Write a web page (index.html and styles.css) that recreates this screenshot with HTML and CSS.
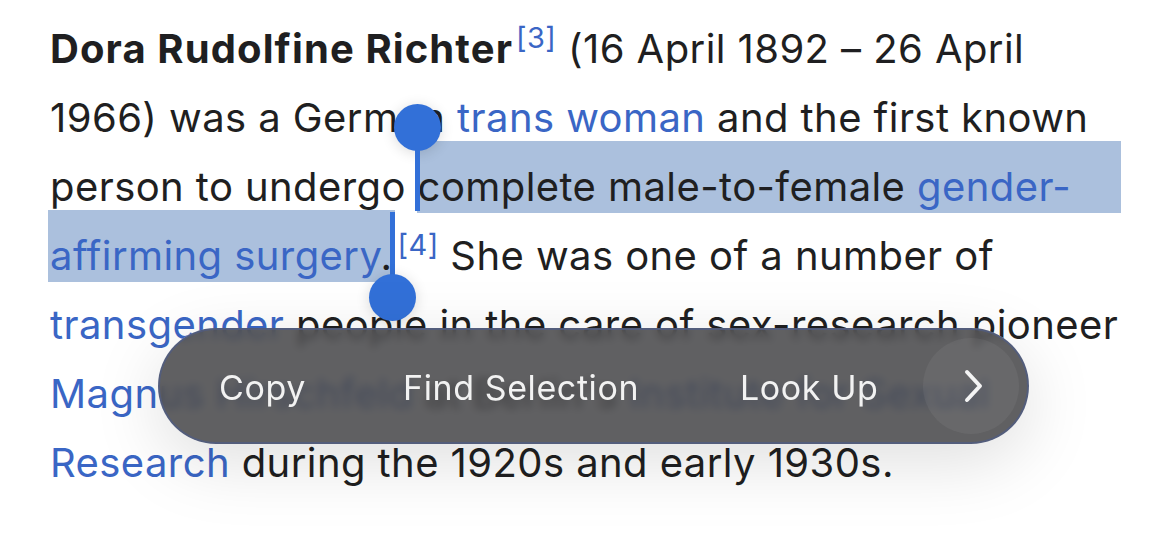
FILE: index.html
```html
<!DOCTYPE html>
<html>
<head>
<meta charset="utf-8">
<link rel="stylesheet" href="styles.css">
</head>
<body>
<div class="page">
  <p class="article">
    <b class="title">Dora Rudolfine Richter</b><sup class="ref">[3]</sup> (16 April 1892 – 26 April<br>
    1966) was a German <a class="link">trans woman</a> and the first known<br>
    person to undergo <span class="sel sel-first">complete male-to-female <a class="link">gender-</a></span><br>
    <span class="sel sel-last"><a class="link">affirming surgery</a>.</span><sup class="ref">[4]</sup> She was one of a number of<br>
    <a class="link">transgender</a> people in the care of sex-research pioneer<br>
    <a class="link">Magnus Hirschfeld</a> at Berlin's <a class="link">Institute for Sexual</a><br>
    <a class="link">Research</a> during the 1920s and early 1930s.
  </p>

  <div class="handle handle-start"><span class="knob"></span><span class="stem"></span></div>
  <div class="handle handle-end"><span class="stem"></span><span class="knob"></span></div>

  <div class="menu">
    <span class="menu-item item-copy">Copy</span>
    <span class="menu-item item-find">Find Selection</span>
    <span class="menu-item item-look">Look Up</span>
    <span class="menu-more">
      <svg width="24" height="34" viewBox="0 0 24 34"><polyline points="6,3 19,17 6,31" fill="none" stroke="#f4f4f4" stroke-width="4" stroke-linecap="round" stroke-linejoin="round"/></svg>
    </span>
  </div>
</div>
</body>
</html>
```

FILE: styles.css
```css
html, body {
  margin: 0;
  padding: 0;
  background: #ffffff;
}

.page {
  position: relative;
  width: 1170px;
  height: 533px;
  overflow: hidden;
}

.article {
  margin: 0;
  padding: 14px 0 0 50px;
  font-family: "Inter", "Noto Sans", sans-serif;
  font-size: 40px;
  line-height: 69px;
  letter-spacing: 0.42px;
  color: #1f1f21;
  white-space: nowrap;
}

.title {
  font-weight: 700;
  letter-spacing: 1.1px;
}

.link {
  color: #3a66c5;
}

.ref {
  color: #3a66c5;
  font-size: 29px;
  line-height: 0;
  vertical-align: baseline;
  position: relative;
  top: -15px;
  margin-left: 3px;
}

.sel {
  background: #abc0dd;
  padding-top: 21px;
  padding-bottom: 2px;
}

.sel-first {
  padding-left: 1px;
  padding-right: 50px;
  margin-left: -1px;
}

.sel-last {
  padding-left: 2px;
  margin-left: -2px;
  padding-right: 2px;
}

.handle {
  position: absolute;
  display: flex;
  flex-direction: column;
  align-items: center;
  width: 48px;
}

.handle-start {
  left: 393px;
  top: 104px;
}

.handle-end {
  left: 368px;
  top: 212px;
}

.knob {
  width: 47px;
  height: 47px;
  border-radius: 50%;
  background: #3270d8;
  box-shadow: 0 2px 14px rgba(0, 0, 0, 0.14);
}

.stem {
  width: 5px;
  background: #3270d8;
}

.handle-start .stem {
  height: 62px;
  margin-top: -2px;
}

.handle-end .stem {
  height: 64px;
  margin-bottom: -2px;
}

.menu {
  position: absolute;
  left: 158px;
  top: 328px;
  width: 871px;
  height: 116px;
  box-sizing: border-box;
  border-radius: 58px;
  background: rgba(70, 70, 72, 0.86);
  backdrop-filter: blur(4px);
  border: 2px solid rgba(80, 92, 130, 0.8);
  box-shadow: 0 18px 70px rgba(0, 0, 0, 0.13);
  display: flex;
  align-items: center;
  padding-left: 59px;
  font-family: "Inter", "Noto Sans", sans-serif;
  font-size: 34px;
  letter-spacing: 0.6px;
  color: #f2f2f2;
  white-space: nowrap;
}

.menu-item {
  line-height: 1;
  padding-top: 3px;
}

.item-copy {
  flex: 0 0 184px;
}

.item-find {
  flex: 0 0 337px;
}

.menu-more {
  margin-left: auto;
  margin-right: 8px;
  width: 96px;
  height: 96px;
  border-radius: 50%;
  background: rgba(255, 255, 255, 0.05);
  display: flex;
  align-items: center;
  justify-content: center;
  padding-left: 3px;
  box-sizing: border-box;
}
```
